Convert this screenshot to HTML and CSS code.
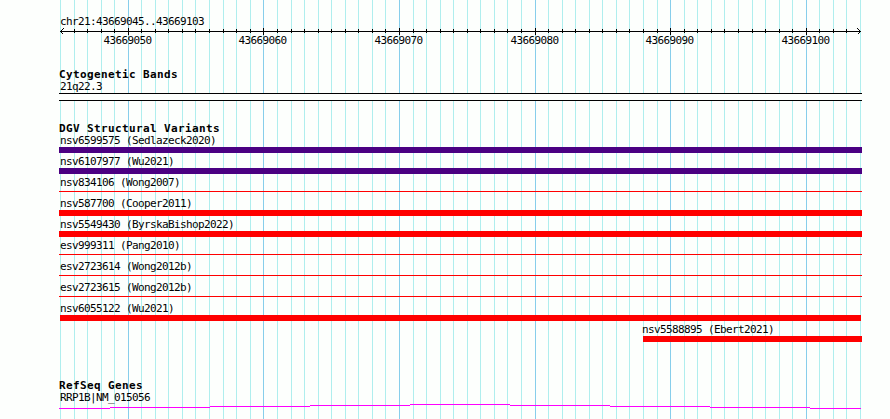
FILE: index.html
```
<!DOCTYPE html>
<html lang="en">
<head>
    <meta charset="UTF-8">
    <meta name="viewport" content="width=device-width, initial-scale=1.0">
    <link rel="stylesheet" href="styles.css">
    <title>chr21:43669045..43669103</title>
</head>
<body>
    <main class="browser">
        <svg class="grid" width="890" height="419" shape-rendering="crispEdges">
            <path class="minor" d="M60.5 0v419M74.5 0v419M87.5 0v419M101.5 0v419M114.5 0v419M141.5 0v419M155.5 0v419M168.5 0v419M182.5 0v419M195.5 0v419M209.5 0v419M223.5 0v419M236.5 0v419M250.5 0v419M277.5 0v419M291.5 0v419M304.5 0v419M318.5 0v419M331.5 0v419M345.5 0v419M358.5 0v419M372.5 0v419M385.5 0v419M413.5 0v419M426.5 0v419M440.5 0v419M453.5 0v419M467.5 0v419M480.5 0v419M494.5 0v419M507.5 0v419M521.5 0v419M548.5 0v419M562.5 0v419M575.5 0v419M589.5 0v419M602.5 0v419M616.5 0v419M629.5 0v419M643.5 0v419M657.5 0v419M684.5 0v419M697.5 0v419M711.5 0v419M724.5 0v419M738.5 0v419M752.5 0v419M765.5 0v419M779.5 0v419M792.5 0v419M819.5 0v419M833.5 0v419M846.5 0v419M860.5 0v419"/>
            <path class="major" d="M128.5 0v419M263.5 0v419M399.5 0v419M535.5 0v419M670.5 0v419M806.5 0v419"/>
        </svg>

        <div class="tracks">
            <section class="ruler">
                <p class="label">chr21:43669045..43669103</p>
                <svg class="axis" width="803" height="20" viewBox="59 28 803 20" shape-rendering="crispEdges">
                    <path d="M60 31.5H861"/>
                    <path d="M74.5 29v4M87.5 29v4M101.5 29v4M114.5 29v4M141.5 29v4M155.5 29v4M168.5 29v4M182.5 29v4M195.5 29v4M209.5 29v4M223.5 29v4M236.5 29v4M250.5 29v4M277.5 29v4M291.5 29v4M304.5 29v4M318.5 29v4M331.5 29v4M345.5 29v4M358.5 29v4M372.5 29v4M385.5 29v4M413.5 29v4M426.5 29v4M440.5 29v4M453.5 29v4M467.5 29v4M480.5 29v4M494.5 29v4M507.5 29v4M521.5 29v4M548.5 29v4M562.5 29v4M575.5 29v4M589.5 29v4M602.5 29v4M616.5 29v4M629.5 29v4M643.5 29v4M657.5 29v4M684.5 29v4M697.5 29v4M711.5 29v4M724.5 29v4M738.5 29v4M752.5 29v4M765.5 29v4M779.5 29v4M792.5 29v4M819.5 29v4M833.5 29v4M846.5 29v4"/>
                    <path d="M128.5 28v7M263.5 28v7M399.5 28v7M535.5 28v7M670.5 28v7M806.5 28v7"/>
                    <path d="M63.5 28.5l-3 3l3 3M857.5 28.5l3 3l-3 3"/>
                    <text x="103.5" y="44">43669050</text>
                    <text x="238.5" y="44">43669060</text>
                    <text x="374.5" y="44">43669070</text>
                    <text x="510.5" y="44">43669080</text>
                    <text x="645.5" y="44">43669090</text>
                    <text x="781.5" y="44">43669100</text>
                </svg>
            </section>

            <section class="track cytobands">
                <h2>Cytogenetic Bands</h2>
                <p class="label">21q22.3</p>
                <div class="band"></div>
            </section>

            <section class="track variants">
                <h2>DGV Structural Variants</h2>
                <div class="variant"><p class="label">nsv6599575 (Sedlazeck2020)</p><div class="bar complex"></div></div>
                <div class="variant"><p class="label">nsv6107977 (Wu2021)</p><div class="bar complex"></div></div>
                <div class="variant"><p class="label">nsv834106 (Wong2007)</p><div class="bar thin"></div></div>
                <div class="variant"><p class="label">nsv587700 (Cooper2011)</p><div class="bar"></div></div>
                <div class="variant"><p class="label">nsv5549430 (ByrskaBishop2022)</p><div class="bar"></div></div>
                <div class="variant"><p class="label">esv999311 (Pang2010)</p><div class="bar thin"></div></div>
                <div class="variant"><p class="label">esv2723614 (Wong2012b)</p><div class="bar thin"></div></div>
                <div class="variant"><p class="label">esv2723615 (Wong2012b)</p><div class="bar thin"></div></div>
                <div class="variant"><p class="label">nsv6055122 (Wu2021)</p><div class="bar inner"></div></div>
                <div class="variant partial"><p class="label">nsv5588895 (Ebert2021)</p><div class="bar"></div></div>
            </section>

            <section class="track genes">
                <h2>RefSeq Genes</h2>
                <p class="label">RRP1B|NM_015056</p>
                <svg class="intron" width="803" height="5" viewBox="59 404 803 5" shape-rendering="crispEdges">
                    <path d="M59 408.5H110M110 407.5H210M210 406.5H310M310 405.5H410M410 404.5H510M510 405.5H610M610 406.5H710M710 407.5H810M810 408.5H861"/>
                </svg>
            </section>
        </div>
    </main>
</body>
</html>
```
FILE: styles.css
```
*{
    margin: 0;
    padding: 0;
    box-sizing: border-box;
}
body{
    background-color: #fdfffd;
    color: #000;
    font-family: 'DejaVu Sans Mono', monospace;
    overflow: hidden;
}
svg{
    display: block;
    fill: none;
}
/* grid lines and tracks share one cell */
.browser{
    display: grid;
    width: 890px;
    height: 419px;
}
.grid,
.tracks{
    grid-area: 1 / 1;
}
.minor{
    stroke: #afeeee;
}
.major{
    stroke: #87ceeb;
}
.tracks{
    width: 862px;
    padding: 15px 0 0 59px;
    z-index: 1;
}
.label,
.axis text{
    font-size: 11px;
    letter-spacing: -0.622px;
    white-space: pre;
}
.label{
    height: 13px;
    line-height: 13px;
    padding-left: 1px;
}
h2{
    height: 12px;
    line-height: 13px;
    font-size: 11px;
    letter-spacing: 0.378px;
    font-weight: bold;
}
.axis path{
    stroke: #000;
}
.axis text{
    fill: #000;
}
.cytobands{
    margin-top: 20px;
}
.band{
    height: 8px;
    background-color: #fdfffd;
    border-top: 1px solid #000;
    border-bottom: 1px solid #000;
}
.variants{
    margin-top: 21px;
}
.variant{
    height: 21px;
}
.bar{
    height: 6px;
    background-color: #ff0000;
}
.complex{
    background-color: #4b0082;
}
.thin{
    height: 1px;
    margin-top: 2px;
}
.inner{
    margin: 0 1px;
}
.partial{
    margin-left: 584px;
}
.partial .label{
    padding-left: 0;
    margin-left: -1px;
}
.genes{
    margin-top: 35px;
}
.intron path{
    stroke: #ff00ff;
}
```
